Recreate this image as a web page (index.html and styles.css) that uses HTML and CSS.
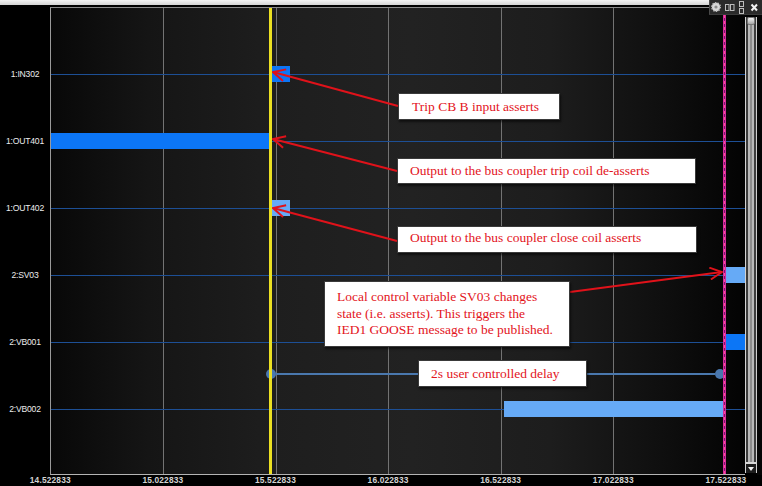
FILE: index.html
```html
<!DOCTYPE html>
<html lang="en">
<head>
<meta charset="utf-8">
<title>Logic analyser</title>
<link rel="stylesheet" href="styles.css">
</head>
<body>
<div class="scope">
  <div class="topbar"></div>

  <div class="main">
    <div class="labels">
      <div class="label">1:IN302</div>
      <div class="label">1:OUT401</div>
      <div class="label">1:OUT402</div>
      <div class="label">2:SV03</div>
      <div class="label">2:VB001</div>
      <div class="label">2:VB002</div>
    </div>

    <div class="plot">
      <div class="lane"><div class="bar bright" style="left:221px;width:18px"></div></div>
      <div class="lane"><div class="bar bright" style="left:0;width:219px"></div></div>
      <div class="lane"><div class="bar pale" style="left:221px;width:18px"></div></div>
      <div class="lane"><div class="bar pale" style="left:674px;width:20px"></div></div>
      <div class="lane">
        <div class="bar bright" style="left:674px;width:20px"></div>
        <div class="delay" style="left:215px;width:459px">
          <span class="dot"></span><span class="span-line"></span><span class="dot"></span>
        </div>
      </div>
      <div class="lane"><div class="bar pale" style="left:453px;width:221px"></div></div>

      <div class="cursor cursor-a" style="left:218px"></div>
      <div class="cursor cursor-b" style="left:672px"></div>
    </div>

    <div class="scroll">
      <div class="thumb"></div>
      <div class="down"></div>
    </div>
    <div class="edge"></div>
  </div>

  <div class="axis">
    <span class="tick">14.522833</span>
    <span class="tick">15.022833</span>
    <span class="tick">15.522833</span>
    <span class="tick">16.022833</span>
    <span class="tick">16.522833</span>
    <span class="tick">17.022833</span>
    <span class="tick">17.522833</span>
  </div>

  <div class="toolbar">
    <svg width="52" height="15" viewBox="0 0 52 15">
      <circle cx="6" cy="7" r="4.2" fill="#d8d8d8" stroke="#bdbdbd" stroke-width="1.6" stroke-dasharray="1.4 1.2"/>
      <circle cx="6" cy="7" r="1.6" fill="#8a8a8a"/>
      <rect x="15.5" y="4.5" width="3.5" height="6" fill="none" stroke="#bcbcbc"/>
      <rect x="20.5" y="4.5" width="3.5" height="6" fill="none" stroke="#bcbcbc"/>
      <rect x="29.5" y="1.5" width="4" height="5" fill="none" stroke="#bcbcbc"/>
      <rect x="29.5" y="8.5" width="4" height="5" fill="none" stroke="#bcbcbc"/>
      <path d="M41.5 4.5 L47 10.5 M47 4.5 L41.5 10.5" stroke="#f2f2f2" stroke-width="2"/>
    </svg>
  </div>

  <svg class="arrows" width="762" height="486" viewBox="0 0 762 486">
    <defs>
      <marker id="head" viewBox="0 0 14 14" refX="13" refY="7" markerWidth="14" markerHeight="14" markerUnits="userSpaceOnUse" orient="auto">
        <path d="M1 1 L13 7 L1 13" fill="none" stroke="#e0121a" stroke-width="2"/>
      </marker>
    </defs>
    <g stroke="#e0121a" stroke-width="2" fill="none">
      <line x1="398" y1="106" x2="273" y2="72" marker-end="url(#head)"/>
      <line x1="397" y1="171" x2="273" y2="139" marker-end="url(#head)"/>
      <line x1="397" y1="241" x2="273" y2="208" marker-end="url(#head)"/>
      <line x1="570" y1="292" x2="722" y2="272" marker-end="url(#head)"/>
    </g>
  </svg>

  <div class="note note-trip">Trip CB B input asserts</div>
  <div class="note note-open">Output to the bus coupler trip coil de-asserts</div>
  <div class="note note-close">Output to the bus coupler close coil asserts</div>
  <div class="note note-goose">Local control variable SV03 changes<br>state (i.e. asserts). This triggers the<br>IED1 GOOSE message to be published.</div>
  <div class="note note-delay">2s user controlled delay</div>
</div>
</body>
</html>
```

FILE: styles.css
```css
* {
  box-sizing: border-box;
  margin: 0;
  padding: 0;
}

html,
body {
  width: 762px;
  height: 486px;
  overflow: hidden;
  background: #000;
}

body {
  font-family: "Liberation Sans", Arial, sans-serif;
}

.scope {
  position: relative;
  width: 762px;
  height: 486px;
  display: flex;
  flex-direction: column;
  background: #000;
}

/* light window frame strip along the top */
.topbar {
  height: 5px;
  margin-bottom: 2px;
  background: linear-gradient(#f4f4f4, #d4d4d4);
}

.main {
  display: grid;
  grid-template-columns: 50px 695px 12px 5px;
  height: 468px;
}

/* channel names */
.labels {
  padding-top: 34px;
  color: #ececec;
  font-size: 8.6px;
  letter-spacing: -0.2px;
}

.label {
  height: 67px;
  line-height: 67px;
  text-align: center;
}

/* trace area: vertical time grid over a dark shaded backdrop */
.plot {
  position: relative;
  display: flex;
  flex-direction: column;
  padding-top: 33px;
  border-top: 1px solid #8a8a8a;
  border-left: 1px solid #9a9a9a;
  border-bottom: 1px solid #b4b4b4;
  background-image:
    linear-gradient(90deg,
      transparent 112px, #737373 112px 113px,
      transparent 113px 225px, #737373 225px 226px,
      transparent 226px 337px, #737373 337px 338px,
      transparent 338px 450px, #737373 450px 451px,
      transparent 451px 562px, #737373 562px 563px,
      transparent 563px 674px, #737373 674px 675px,
      transparent 675px),
    linear-gradient(90deg,
      #080808 0%, #151515 14%, #1e1e1e 32%, #222 52%,
      #1d1d1d 72%, #0e0e0e 89%, #030303 100%);
}

.lane {
  position: relative;
  flex: none;
  height: 67px;
}

.lane::before {
  content: "";
  position: absolute;
  left: 0;
  right: 0;
  top: 33px;
  height: 1px;
  background: #1d4f95;
}

.bar {
  position: absolute;
  top: 25px;
  height: 16px;
}

.bar.bright {
  background: #0c76f6;
}

.bar.pale {
  background: #66aaf6;
}

/* measured interval between the two cursors */
.delay {
  position: absolute;
  top: 60px;
  height: 10px;
  display: flex;
  align-items: center;
}

.dot {
  flex: none;
  width: 10px;
  height: 10px;
  border-radius: 50%;
  background: #4a78ae;
}

.span-line {
  flex: 1;
  height: 2px;
  background: #4a78ae;
}

.cursor {
  position: absolute;
  top: 0;
  bottom: 0;
  width: 3px;
}

.cursor-a {
  background: #ece022;
}

.cursor-b {
  top: -2px;
  background:
    repeating-linear-gradient(180deg, #7a1470 0 3px, #ff4a9a 3px 6px) center / 1px 100% no-repeat,
    #d42a9e;
}

/* vertical scroll bar */
.scroll {
  display: flex;
  flex-direction: column;
  justify-content: space-between;
  margin-top: 10px;
  margin-bottom: 2px;
  background: linear-gradient(90deg,
    #d2d2d2 0 1px, #3c3c3c 1px 3px, #b8b8b8 3px 5px,
    #8c8c8c 5px 7px, #b8b8b8 7px 9px, #3c3c3c 9px 11px, #cfcfcf 11px 12px);
}

.thumb {
  height: 8px;
  margin: 0 2px;
  border: 1px solid #777;
  border-radius: 2px;
  background: linear-gradient(#f2f2f2, #a8a8a8);
}

.down {
  position: relative;
  height: 11px;
  margin: 0 1px;
  border-top: 2px solid #d8d8d8;
  background: #1c1c1c;
}

.down::after {
  content: "";
  position: absolute;
  left: 2px;
  top: 3px;
  border-left: 3px solid transparent;
  border-right: 3px solid transparent;
  border-top: 4px solid #f0f0f0;
}

.edge {
  background: #050505;
}

/* time axis */
.axis {
  display: flex;
  height: 11px;
  margin-left: -6px;
}

.tick {
  flex: none;
  width: 112.6px;
  text-align: center;
  color: #d4d4d4;
  font-weight: bold;
  font-size: 8.4px;
  letter-spacing: 0.15px;
  line-height: 11px;
}

/* window controls */
.toolbar {
  position: absolute;
  top: 0;
  right: 0;
  width: 53px;
  height: 15px;
  background: #2a2a2a;
  border-left: 1px solid #4a4a4a;
  border-bottom: 1px solid #3a3a3a;
}

.toolbar svg {
  display: block;
}

.arrows {
  position: absolute;
  top: 0;
  left: 0;
  pointer-events: none;
}

/* annotation boxes */
.note {
  position: absolute;
  display: flex;
  align-items: center;
  background: #fff;
  border: 1px solid #3a3a3a;
  box-shadow: 1px 2px 2px rgba(0, 0, 0, 0.55);
  color: #e3141c;
  font-family: "Liberation Serif", "Times New Roman", serif;
  font-size: 13.5px;
  line-height: 16.5px;
  white-space: nowrap;
}

.note-trip {
  left: 398px;
  top: 93px;
  width: 162px;
  height: 27px;
  padding: 2px 0 0 13px;
}

.note-open {
  left: 397px;
  top: 158px;
  width: 299px;
  height: 26px;
  padding: 1px 0 0 12px;
}

.note-close {
  left: 397px;
  top: 226px;
  width: 300px;
  height: 27px;
  padding: 0 0 2px 12px;
}

.note-goose {
  left: 324px;
  top: 281px;
  width: 246px;
  height: 66px;
  padding: 0 0 0 12px;
}

.note-delay {
  left: 418px;
  top: 360px;
  width: 169px;
  height: 27px;
  padding: 1px 0 0 12px;
}
```
